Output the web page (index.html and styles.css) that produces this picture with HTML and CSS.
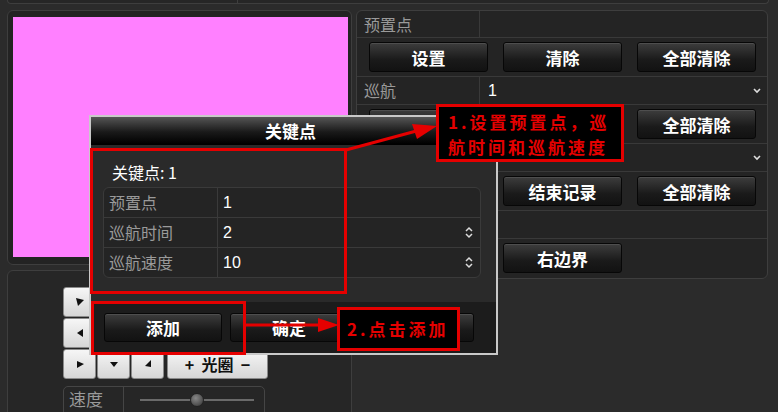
FILE: index.html
```html
<!DOCTYPE html>
<html>
<head>
<meta charset="utf-8">
<link rel="stylesheet" href="styles.css">
</head>
<body>
<div class="topbar"><div class="topbar-left"></div></div>
<div class="main">
  <div class="leftcol">
    <div class="video-panel"><div class="video"></div></div>
    <div class="ptz-panel">
      <div class="ptz-grid">
        <div class="prow">
          <div class="pbtn"><svg width="10" height="10" viewBox="0 0 10 10"><polygon points="1,1 9,3 3,9" fill="#111"/></svg></div>
          <div class="pbtn"></div>
          <div class="pbtn"></div>
          <div class="pbtn wide"></div>
        </div>
        <div class="prow">
          <div class="pbtn"><svg width="10" height="10" viewBox="0 0 10 10"><polygon points="2,5 8,1 8,9" fill="#111"/></svg></div>
          <div class="pbtn"></div>
          <div class="pbtn"></div>
          <div class="pbtn wide"></div>
        </div>
        <div class="prow">
          <div class="pbtn"><svg width="10" height="10" viewBox="0 0 10 10"><polygon points="2,2 9,5 2,9" fill="#111"/></svg></div>
          <div class="pbtn"><svg width="10" height="10" viewBox="0 0 10 10"><polygon points="1,3 9,3 5,8" fill="#111"/></svg></div>
          <div class="pbtn"><svg width="10" height="10" viewBox="0 0 10 10"><polygon points="8,1 8,8 2,7" fill="#111"/></svg></div>
          <div class="pbtn wide">+&nbsp; 光圈 &nbsp;−</div>
        </div>
      </div>
      <div class="speed">
        <div class="speed-label">速度</div>
        <div class="slider"><div class="track"></div><div class="knob"></div></div>
      </div>
    </div>
  </div>
  <div class="right-panel">
    <div class="row lrow"><div class="lbl">预置点</div><div class="val"></div></div>
    <div class="row brow"><div class="btn">设置</div><div class="btn">清除</div><div class="btn">全部清除</div></div>
    <div class="row lrow"><div class="lbl">巡航</div><div class="val">1<svg class="chev" width="8" height="6" viewBox="0 0 8 6"><polyline points="1,1 4,4 7,1" fill="none" stroke="#ddd" stroke-width="1.6"/></svg></div></div>
    <div class="row brow"><div class="btn"></div><div class="btn"></div><div class="btn">全部清除</div></div>
    <div class="row lrow"><div class="lbl"></div><div class="val"><svg class="chev" width="8" height="6" viewBox="0 0 8 6"><polyline points="1,1 4,4 7,1" fill="none" stroke="#ddd" stroke-width="1.6"/></svg></div></div>
    <div class="row brow"><div class="btn"></div><div class="btn">结束记录</div><div class="btn">全部清除</div></div>
    <div class="row lrow"><div class="lbl"></div><div class="val"></div></div>
    <div class="row brow last"><div class="btn"></div><div class="btn">右边界</div></div>
  </div>
</div>

<div class="dialog">
  <div class="dlg-title">关键点</div>
  <div class="dlg-body">
    <div class="dlg-caption">关键点:&nbsp;1</div>
    <div class="dlg-table">
      <div class="trow"><div class="tlbl">预置点</div><div class="tval">1</div></div>
      <div class="trow"><div class="tlbl">巡航时间</div><div class="tval">2<svg class="spin" width="8" height="13" viewBox="0 0 8 13"><polyline points="1,5 4,2 7,5" fill="none" stroke="#ddd" stroke-width="1.5"/><polyline points="1,8 4,11 7,8" fill="none" stroke="#ddd" stroke-width="1.5"/></svg></div></div>
      <div class="trow"><div class="tlbl">巡航速度</div><div class="tval">10<svg class="spin" width="8" height="13" viewBox="0 0 8 13"><polyline points="1,5 4,2 7,5" fill="none" stroke="#ddd" stroke-width="1.5"/><polyline points="1,8 4,11 7,8" fill="none" stroke="#ddd" stroke-width="1.5"/></svg></div></div>
    </div>
  </div>
  <div class="dlg-footer">
    <div class="btn fbtn">添加</div>
    <div class="btn fbtn">确定</div>
    <div class="btn fbtn"></div>
  </div>
</div>

<div class="redbox box1"></div>
<div class="redbox box2"></div>
<svg class="arrows" width="778" height="412" viewBox="0 0 778 412">
  <line x1="346" y1="150" x2="420" y2="130" stroke="#e50000" stroke-width="3"/>
  <polygon points="437,126 412,124 417,139" fill="#e50000"/>
  <line x1="245" y1="325" x2="322" y2="325" stroke="#e50000" stroke-width="3"/>
  <polygon points="339,325 318,318 318,332" fill="#e50000"/>
</svg>
<div class="note note1">1.设置预置点，巡<br>航时间和巡航速度</div>
<div class="note note2">2.点击添加</div>
</body>
</html>
```
FILE: styles.css
```css
* { box-sizing: border-box; }
html, body { margin: 0; padding: 0; }
body {
  width: 778px;
  height: 412px;
  overflow: hidden;
  position: relative;
  background: #2b2b2b;
  font-family: "Liberation Sans", "Noto Sans CJK SC", sans-serif;
}
.topbar {
  height: 4px;
  margin: 0 9px 0 7px;
  border: 1px solid #3e3e3e;
  border-top: none;
  border-radius: 0 0 4px 4px;
  background: #262626;
}
.topbar-left { width: 230px; height: 100%; border-right: 1px solid #3e3e3e; }
.main { display: flex; gap: 4px; padding: 6px 0 0 7px; }
.leftcol { width: 345px; display: flex; flex-direction: column; gap: 5px; }
.video-panel {
  height: 255px;
  border: 1px solid #3e3e3e;
  border-radius: 6px;
  background: #232323;
  padding: 6px 3px 7px 5px;
}
.video { height: 100%; background: #ff80ff; }
.ptz-panel {
  height: 150px;
  border: 1px solid #3e3e3e;
  border-radius: 6px;
  background: #262626;
  padding: 16px 0 0 55px;
}
.ptz-grid { display: flex; flex-direction: column; gap: 1px; }
.prow { display: flex; gap: 1px; }
.pbtn {
  width: 33px;
  height: 30px;
  background: linear-gradient(#f6f6f6, #d6d6d6);
  border: 1px solid #8a8a8a;
  border-radius: 3px;
  display: flex;
  align-items: center;
  justify-content: center;
}
.pbtn.wide {
  width: 101px;
  margin-left: 2px;
  font-family: "Noto Sans CJK SC", sans-serif;
  font-weight: bold;
  font-size: 16px;
  color: #111;
}
.speed {
  margin-top: 7px;
  width: 202px;
  height: 34px;
  border: 1px solid #454545;
  border-radius: 5px;
  display: flex;
}
.speed-label {
  width: 60px;
  border-right: 1px solid #454545;
  color: #9a9a9a;
  font-family: "Noto Sans CJK SC", sans-serif;
  font-size: 17px;
  line-height: 24px;
  padding-left: 5px;
}
.slider { position: relative; flex: 1; }
.track {
  position: absolute;
  left: 16px;
  right: 10px;
  top: 12px;
  height: 2px;
  background: #6a6a6a;
}
.knob {
  position: absolute;
  left: 66px;
  top: 6px;
  width: 14px;
  height: 14px;
  border-radius: 50%;
  background: radial-gradient(circle at 40% 35%, #888, #333);
  border: 1px solid #222;
}
.right-panel {
  width: 412px;
  height: 269px;
  border: 1px solid #3e3e3e;
  border-radius: 6px;
  background: #242424;
  display: flex;
  flex-direction: column;
}
.row { border-bottom: 1px solid #393939; }
.row.last { border-bottom: none; }
.lrow { height: 28px; display: flex; }
.lrow:first-child { height: 27px; }
.lbl {
  width: 123px;
  border-right: 1px solid #393939;
  color: #9a9a9a;
  font-family: "Noto Sans CJK SC", sans-serif;
  font-size: 16px;
  line-height: 26px;
  padding-left: 7px;
}
.val {
  flex: 1;
  position: relative;
  color: #fff;
  font-size: 16px;
  line-height: 27px;
  padding-left: 8px;
}
.chev { position: absolute; right: 6px; top: 11px; }
.brow {
  height: 39px;
  display: grid;
  grid-template-columns: repeat(3, 119px);
  column-gap: 15px;
  padding-left: 12px;
  align-items: center;
}
.brow.last { height: 36px; align-items: start; padding-top: 4px; }
.btn {
  height: 30px;
  background: linear-gradient(#3d3d3d, #1a1a1a 60%, #121212);
  border: 1px solid #070707;
  border-radius: 3px;
  box-shadow: inset 0 1px 0 #4e4e4e;
  color: #fff;
  font-family: "Noto Sans CJK SC", sans-serif;
  font-weight: bold;
  font-size: 17px;
  display: flex;
  align-items: center;
  justify-content: center;
}
.dialog {
  position: absolute;
  left: 89px;
  top: 115px;
  width: 409px;
  height: 240px;
  border: 2px solid #c9c9c9;
  background: #2a2a2a;
  display: flex;
  flex-direction: column;
}
.dlg-title {
  height: 28px;
  background: linear-gradient(#555, #1a1a1a 55%, #000);
  border-bottom: 1px solid #000;
  color: #fff;
  font-family: "Noto Sans CJK SC", sans-serif;
  font-weight: bold;
  font-size: 17px;
  line-height: 28px;
  text-align: center;
  padding-right: 6px;
}
.dlg-body { flex: 1; padding: 14px 0 0 12px; }
.dlg-caption {
  color: #fff;
  font-family: "Noto Sans CJK SC", sans-serif;
  font-size: 16px;
  line-height: 26px;
  padding-left: 9px;
  margin-bottom: 2px;
}
.dlg-table {
  width: 378px;
  border: 1px solid #3a3a3a;
  border-radius: 6px;
  background: #242424;
}
.trow { display: flex; height: 30px; border-bottom: 1px solid #3a3a3a; }
.trow:last-child { border-bottom: none; height: 29px; }
.tlbl {
  width: 114px;
  border-right: 1px solid #3a3a3a;
  color: #9a9a9a;
  font-family: "Noto Sans CJK SC", sans-serif;
  font-size: 16px;
  line-height: 29px;
  padding-left: 5px;
}
.tval {
  flex: 1;
  position: relative;
  color: #fff;
  font-size: 16px;
  line-height: 29px;
  padding-left: 5px;
}
.spin { position: absolute; right: 7px; top: 8px; }
.dlg-footer {
  height: 51px;
  background: #1c1c1c;
  display: flex;
  gap: 8px;
  padding: 11px 0 0 13px;
}
.fbtn { width: 118px; height: 29px; }
.redbox {
  position: absolute;
  border: 3px solid #e50000;
}
.box1 { left: 90px; top: 148px; width: 257px; height: 146px; }
.box2 { left: 91px; top: 301px; width: 155px; height: 54px; }
.arrows { position: absolute; left: 0; top: 0; }
.note {
  position: absolute;
  background: #000;
  border: 3px solid #e50000;
  color: #e50000;
  font-family: "Noto Sans CJK SC", sans-serif;
  font-weight: bold;
  font-size: 17px;
  letter-spacing: 3px;
}
.note1 { left: 436px; top: 104px; width: 188px; height: 58px; padding: 2px 0 0 9px; line-height: 25px; }
.note2 { left: 337px; top: 307px; width: 123px; height: 44px; padding: 0 0 0 7px; line-height: 38px; }
```
